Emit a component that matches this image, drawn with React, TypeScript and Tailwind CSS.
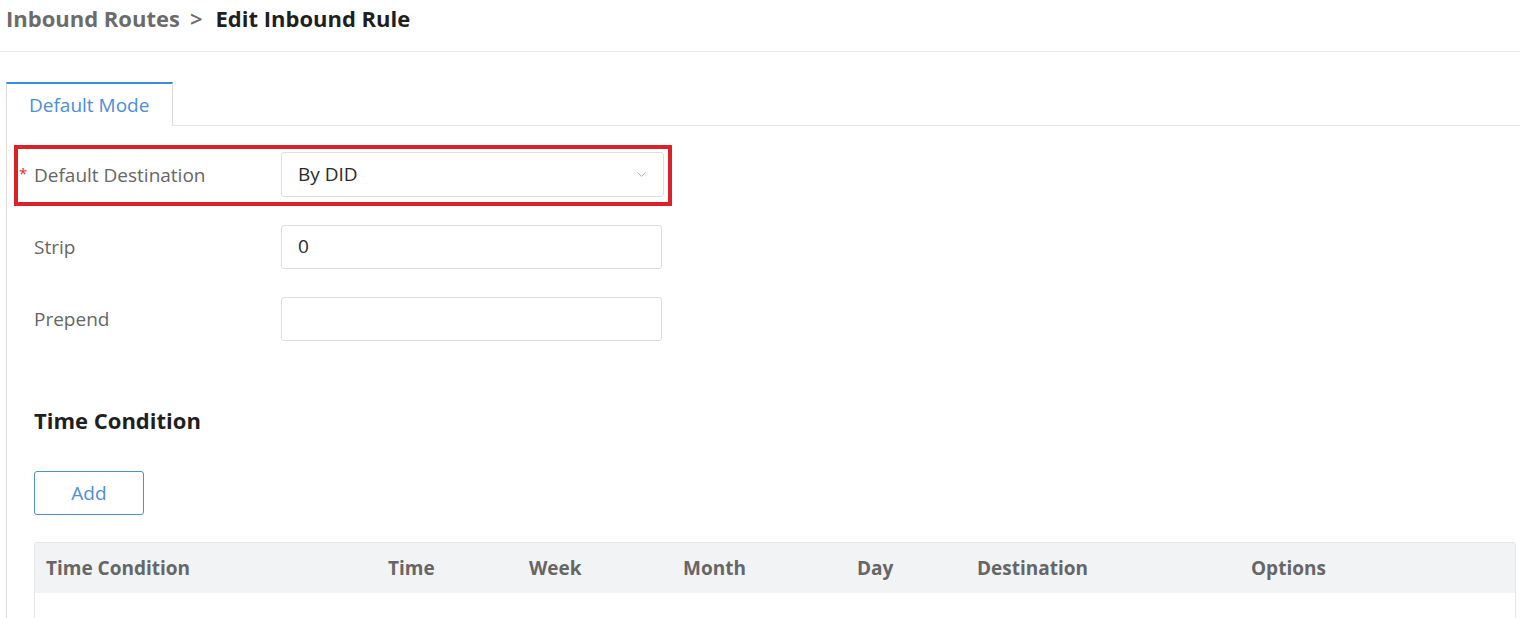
import { ChevronDown } from "lucide-react";

const columns = [
  { label: "Time Condition", width: "w-[342px]" },
  { label: "Time", width: "w-[141px]" },
  { label: "Week", width: "w-[154px]" },
  { label: "Month", width: "w-[174px]" },
  { label: "Day", width: "w-[120px]" },
  { label: "Destination", width: "w-[274px]" },
  { label: "Options", width: "flex-1" },
];

const FieldRow = ({
  label,
  required,
  children,
}: {
  label: string;
  required?: boolean;
  children: React.ReactNode;
}) => (
  <div className="flex items-center h-[45px]">
    <label className="relative w-[247px] pt-[2px] text-[19px] text-[#666]">
      {required && (
        <span className="absolute -left-[15px] top-[7px] text-[15px] leading-none text-[#e8262b]">*</span>
      )}
      {label}
    </label>
    {children}
  </div>
);

const App = () => {
  return (
    <div className="h-screen bg-white font-['Open_Sans',sans-serif] overflow-hidden">
      {/* Breadcrumb */}
      <div className="h-[52px] border-b border-[#e8e8e8] px-[6px] pt-[2px] flex items-start">
        <h1 className="flex items-center text-[22px] font-bold leading-[32px]">
          <span className="text-[#6b6b6b]">Inbound Routes</span>
          <span className="text-[#6b6b6b] font-semibold ml-[10px] mr-[13px]">&gt;</span>
          <span className="text-[#1f1f1f]">Edit Inbound Rule</span>
        </h1>
      </div>

      <div className="pl-[6px] pt-[30px]">
        {/* Tabs */}
        <div className="flex border-b border-[#e4e4e4]">
          <div className="w-[167px] h-[44px] border-t-2 border-x border-t-[#3b8be0] border-x-[#dcdcdc] -mb-px bg-white flex items-center pl-[22px] text-[19px] text-[#4a8fdc]">
            Default Mode
          </div>
        </div>

        {/* Panel */}
        <div className="border-l border-[#dcdcdc] pl-[27px] pt-[26px]">
          <div className="flex flex-col gap-[27px]">
            <div className="relative w-[630px]">
              <span className="pointer-events-none absolute -left-[20px] -right-[8px] -top-[7px] -bottom-[9px] border-[4px] border-[#dc2128]" />
              <FieldRow label="Default Destination" required>
                <div className="w-[383px] h-[45px] border border-[#dedede] rounded-[3px] flex items-center justify-between pl-[16px] pr-[14px] text-[19px] text-[#2a2a2a]">
                  <span>By DID</span>
                  <ChevronDown className="w-[15px] h-[15px] text-[#9e9e9e]" strokeWidth={1.4} />
                </div>
              </FieldRow>
            </div>
            <FieldRow label="Strip">
              <div className="w-[381px] h-[44px] border border-[#dedede] rounded-[3px] flex items-center pl-[16px] text-[19px] text-[#2a2a2a]">
                0
              </div>
            </FieldRow>
            <FieldRow label="Prepend">
              <div className="w-[381px] h-[44px] border border-[#dedede] rounded-[3px]" />
            </FieldRow>
          </div>

          <h2 className="mt-[64px] text-[22px] font-bold text-[#1f1f1f] leading-[30px]">Time Condition</h2>

          <button className="mt-[36px] w-[110px] h-[44px] border border-[#4a8fdc] rounded-[3px] text-[19px] text-[#4a8fdc] bg-white">
            Add
          </button>

          {/* Table */}
          <div className="mt-[27px] mr-[4px] border border-[#e6e6e6] border-b-0 rounded-t-[3px] h-[80px]">
            <div className="flex items-center h-[50px] bg-[#f2f3f5] pl-[11px]">
              {columns.map((c) => (
                <div key={c.label} className={`${c.width} text-[19px] font-bold text-[#666]`}>
                  {c.label}
                </div>
              ))}
            </div>
          </div>
        </div>
      </div>
    </div>
  );
};

export default App;
